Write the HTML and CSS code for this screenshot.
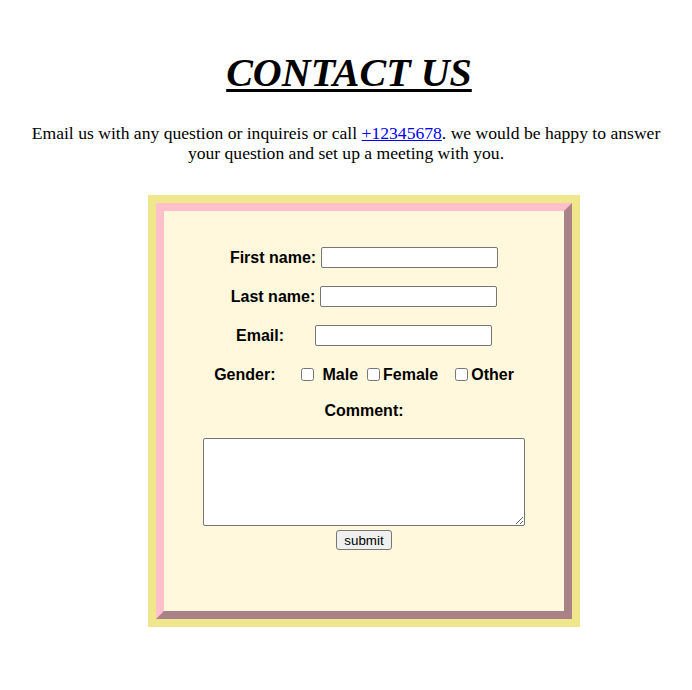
FILE: index.html
```html
<!DOCTYPE html>
<html>
<head>
<meta charset="utf-8">
<title>Contact Us</title>
<link rel="stylesheet" href="styles.css">
</head>
<body>
<h1 class="title">CONTACT US</h1>
<p class="intro">Email us with any question or inquireis or call <a href="#" class="phone">+12345678</a>. we would be happy to answer your question and set up a meeting with you.</p>
<div class="frame">
  <form class="card">
    <div class="row"><label class="lbl">First name:</label><input class="field" type="text"></div>
    <div class="row row-last"><label class="lbl">Last name:</label><input class="field" type="text"></div>
    <div class="row row-email"><label class="lbl lbl-email">Email:</label><input class="field" type="text"></div>
    <div class="row row-gender">
      <span class="lbl lbl-gender">Gender:</span>
      <input type="checkbox" class="chk chk-male"><span class="lbl opt-male">Male</span>
      <input type="checkbox" class="chk chk-female"><span class="lbl opt-female">Female</span>
      <input type="checkbox" class="chk chk-other"><span class="lbl">Other</span>
    </div>
    <div class="row row-comment"><span class="lbl">Comment:</span></div>
    <div class="area-row"><textarea class="area"></textarea></div>
    <div class="submit-row"><button type="button" class="btn">submit</button></div>
  </form>
</div>
</body>
</html>
```
FILE: styles.css
```css
html, body {
  margin: 0;
  padding: 0;
  background: #ffffff;
}
body {
  margin: 8px;
  font-family: "Liberation Serif", "Times New Roman", serif;
  color: #000;
}
.title {
  margin: 40px 0 0;
  padding-left: 6px;
  text-align: center;
  font-family: "Liberation Serif", "Times New Roman", serif;
  font-size: 40px;
  font-weight: bold;
  font-style: italic;
  text-decoration: underline;
  text-decoration-thickness: 3px;
  text-underline-offset: 3px;
  line-height: 50px;
}
.intro {
  margin: 25px 0 0;
  padding: 0 10px;
  text-align: center;
  font-size: 17.6px;
  line-height: 20px;
}
.phone {
  color: #0000ee;
}
.frame {
  width: 416px;
  margin: 32px 0 0 140px;
  padding: 8px;
  background: #f0e68c;
}
.card {
  box-sizing: border-box;
  width: 416px;
  height: 416px;
  border: 8px outset #ffc0cb;
  background: #fff8dc;
  padding-top: 36px;
  font-family: "Liberation Sans", Arial, sans-serif;
}
.row {
  display: flex;
  justify-content: center;
  align-items: center;
  height: 21px;
  margin-bottom: 18px;
}
.lbl {
  font-size: 16px;
  font-weight: bold;
  line-height: 21px;
  white-space: nowrap;
}
.field {
  box-sizing: border-box;
  width: 177px;
  height: 21px;
  margin: 0 0 0 5px;
  padding: 1px 2px;
  border: 1px solid #767676;
  border-radius: 2px;
  background: #fff;
}
.lbl-email {
  margin-right: 26px;
}
.row-gender {
  margin-bottom: 15px;
}
.chk {
  width: 13px;
  height: 13px;
  margin: 0;
}
.chk-male { margin-left: 26px; margin-right: 8px; }
.chk-female { margin-left: 9px; margin-right: 3px; }
.chk-other { margin-left: 17px; margin-right: 3px; }
.row-comment {
  margin-bottom: 17px;
}
.area-row {
  display: flex;
  justify-content: center;
}
.area {
  box-sizing: border-box;
  width: 322px;
  height: 88px;
  margin: 0;
  border: 1px solid #767676;
  border-radius: 2px;
  background: #fff;
}
.submit-row {
  display: flex;
  justify-content: center;
  margin-top: 4px;
}
.btn {
  box-sizing: border-box;
  width: 56px;
  height: 20px;
  padding: 0;
  font-family: "Liberation Sans", Arial, sans-serif;
  font-size: 13.33px;
  color: #000;
  background: #efefef;
  border: 1px solid #767676;
  border-radius: 3px;
}
```
